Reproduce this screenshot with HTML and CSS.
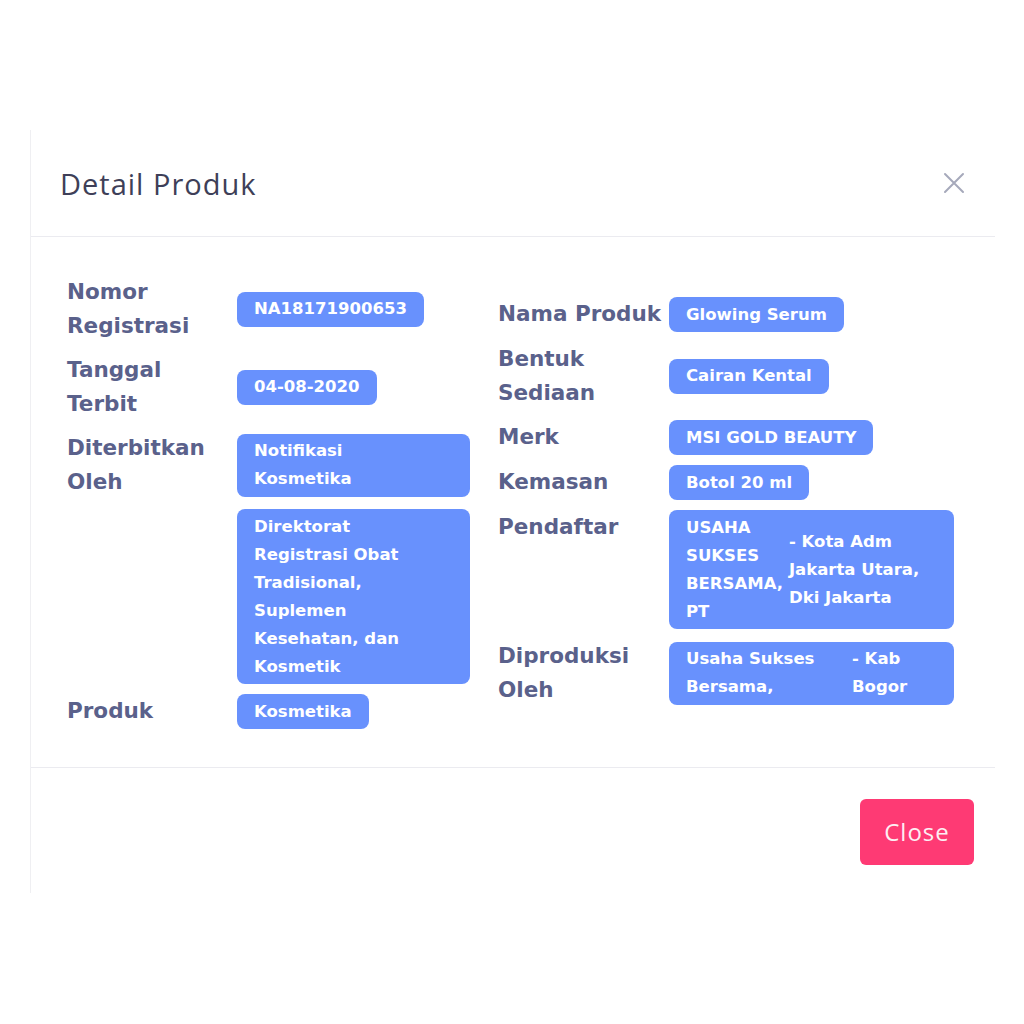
FILE: index.html
```html
<!DOCTYPE html>
<html lang="id">
<head>
<meta charset="utf-8">
<title>Detail Produk</title>
<link rel="stylesheet" href="styles.css">
</head>
<body>
<div class="modal">
  <div class="modal-header">
    <h4 class="modal-title">Detail Produk</h4>
    <button class="close-x" aria-label="Close">
      <svg width="22" height="22" viewBox="0 0 22 22"><path d="M2 2 L20 20 M20 2 L2 20" stroke="#a6a9bb" stroke-width="2" stroke-linecap="round" fill="none"/></svg>
    </button>
  </div>
  <div class="modal-body">
    <div class="detail detail-left">
      <div class="label">Nomor Registrasi</div>
      <div class="value"><span class="badge">NA18171900653</span></div>
      <div class="label">Tanggal Terbit</div>
      <div class="value"><span class="badge">04-08-2020</span></div>
      <div class="label">Diterbitkan Oleh</div>
      <div class="value"><span class="badge badge-block">Notifikasi<br>Kosmetika</span></div>
      <div class="label"></div>
      <div class="value"><span class="badge badge-block">Direktorat<br>Registrasi Obat<br>Tradisional,<br>Suplemen<br>Kesehatan, dan<br>Kosmetik</span></div>
      <div class="label">Produk</div>
      <div class="value"><span class="badge">Kosmetika</span></div>
    </div>
    <div class="detail detail-right">
      <div class="label">Nama Produk</div>
      <div class="value"><span class="badge">Glowing Serum</span></div>
      <div class="label">Bentuk Sediaan</div>
      <div class="value"><span class="badge">Cairan Kental</span></div>
      <div class="label">Merk</div>
      <div class="value"><span class="badge">MSI GOLD BEAUTY</span></div>
      <div class="label">Kemasan</div>
      <div class="value"><span class="badge">Botol 20 ml</span></div>
      <div class="label">Pendaftar</div>
      <div class="value"><div class="badge badge-split"><span class="part part-a1">USAHA SUKSES BERSAMA, PT</span><span class="part part-b1">- Kota Adm Jakarta Utara, Dki Jakarta</span></div></div>
      <div class="label">Diproduksi Oleh</div>
      <div class="value"><div class="badge badge-split"><span class="part part-a2">Usaha Sukses Bersama,</span><span class="part part-b2">- Kab Bogor</span></div></div>
    </div>
  </div>
  <div class="modal-footer">
    <button class="btn-close">Close</button>
  </div>
</div>
</body>
</html>
```
FILE: styles.css
```css
html, body {
  margin: 0;
  padding: 0;
  background: #ffffff;
}
body {
  font-family: "DejaVu Sans", "Open Sans", sans-serif;
}
.modal {
  margin: 130px 0 0 30px;
  width: 965px;
  height: 763px;
  border-left: 1px solid #efeff2;
  box-sizing: border-box;
  display: flex;
  flex-direction: column;
  background: #fff;
}
.modal-header {
  height: 107px;
  box-sizing: border-box;
  padding: 0 30px 0 29px;
  display: flex;
  align-items: center;
  justify-content: space-between;
  border-bottom: 1px solid #ebebf0;
}
.modal-title {
  margin: 0;
  font-family: "Open Sans", sans-serif;
  font-size: 29px;
  font-weight: 500;
  color: #3e3f58;
  letter-spacing: 1px;
}
.close-x {
  border: 0;
  background: none;
  padding: 0;
  width: 22px;
  height: 22px;
  display: flex;
}
.modal-body {
  height: 531px;
  box-sizing: border-box;
  border-bottom: 1px solid #ebebf0;
  padding: 0 0 0 36px;
  display: flex;
  align-items: center;
  gap: 28px;
}
.detail {
  display: grid;
  row-gap: 10px;
}
.detail-left {
  grid-template-columns: 170px 233px;
}
.detail-right {
  grid-template-columns: 171px 285px;
}
.label {
  align-self: start;
  font-size: 21.5px;
  font-weight: 700;
  line-height: 34px;
  color: #5a618b;
}
.value {
  align-self: center;
  display: flex;
}
.badge {
  display: inline-block;
  background: #6891fd;
  color: #ffffff;
  border-radius: 8px;
  padding: 3.5px 17px;
  font-size: 16.5px;
  font-weight: 700;
  line-height: 28px;
}
.badge-block {
  flex: 1;
}
.badge-split {
  flex: 1;
  display: flex;
  align-items: center;
  gap: 6px;
}
.part-a1 { flex: none; width: min-content; }
.part-b1 { flex: 1; }
.part-a2 { flex: none; width: 160px; }
.part-b2 { flex: 1; }
.modal-footer {
  flex: 1;
  display: flex;
  align-items: center;
  justify-content: flex-end;
  padding: 2px 21px 0 0;
}
.btn-close {
  width: 114px;
  height: 66px;
  border: 0;
  border-radius: 6px;
  background: #fe3a74;
  color: #fdeef3;
  font-family: "Open Sans", sans-serif;
  font-size: 24px;
  font-weight: 400;
  letter-spacing: 1px;
}
```
